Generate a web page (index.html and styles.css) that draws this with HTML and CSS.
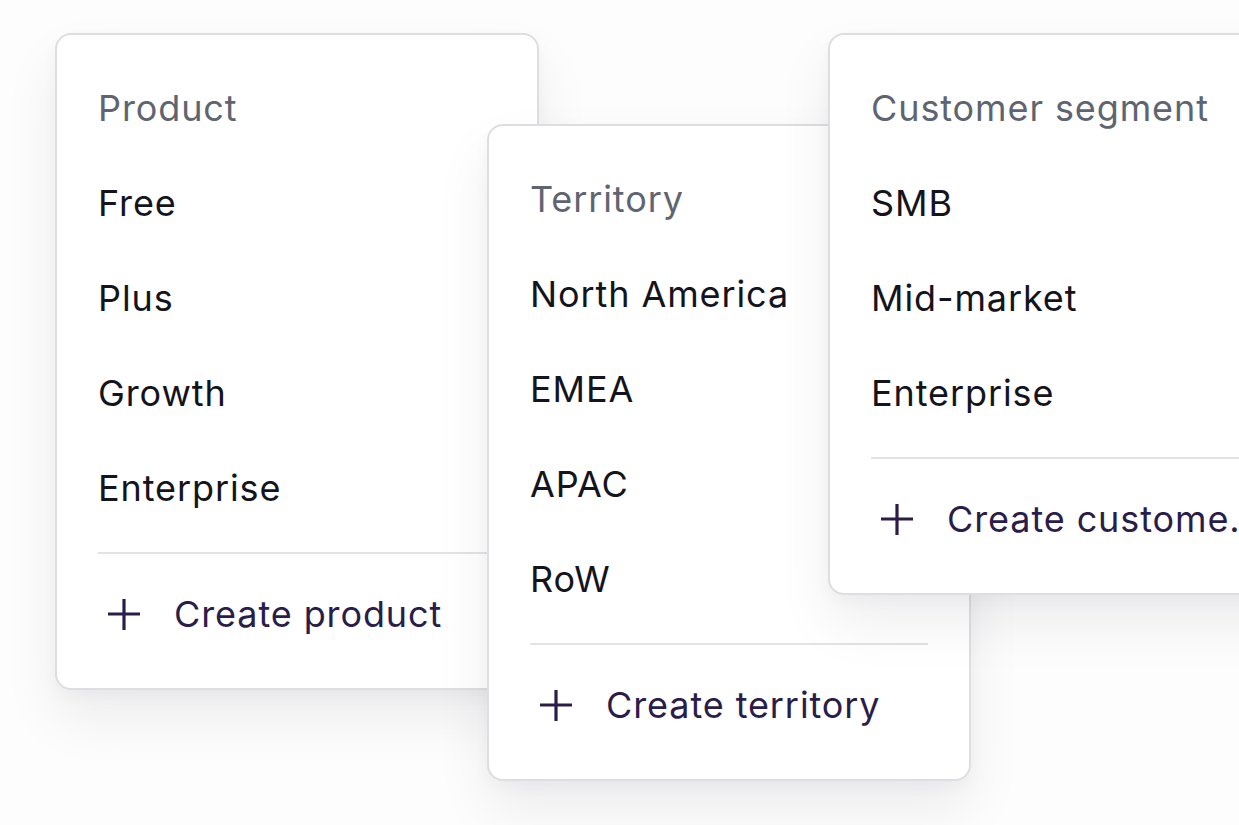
FILE: index.html
```html
<!DOCTYPE html>
<html>
<head>
<meta charset="utf-8">
<link rel="stylesheet" href="styles.css">
</head>
<body>
<div class="canvas">
  <div class="card card-product">
    <div class="card-title">Product</div>
    <div class="item">Free</div>
    <div class="item">Plus</div>
    <div class="item">Growth</div>
    <div class="item">Enterprise</div>
    <div class="divider"></div>
    <div class="create">
      <svg class="plus" viewBox="0 0 32 32" width="32" height="32"><path d="M16 1v32M0 16h32" stroke="#2b1d4a" stroke-width="3.2" fill="none"/></svg>
      <span class="create-label">Create product</span>
    </div>
  </div>
  <div class="card card-territory">
    <div class="card-title">Territory</div>
    <div class="item">North America</div>
    <div class="item">EMEA</div>
    <div class="item">APAC</div>
    <div class="item">RoW</div>
    <div class="divider"></div>
    <div class="create">
      <svg class="plus" viewBox="0 0 32 32" width="32" height="32"><path d="M16 1v32M0 16h32" stroke="#2b1d4a" stroke-width="3.2" fill="none"/></svg>
      <span class="create-label">Create territory</span>
    </div>
  </div>
  <div class="card card-segment">
    <div class="card-title">Customer segment</div>
    <div class="item">SMB</div>
    <div class="item">Mid-market</div>
    <div class="item">Enterprise</div>
    <div class="divider"></div>
    <div class="create">
      <svg class="plus" viewBox="0 0 32 32" width="32" height="32"><path d="M16 1v32M0 16h32" stroke="#2b1d4a" stroke-width="3.2" fill="none"/></svg>
      <span class="create-label">Create customer segment</span>
    </div>
  </div>
</div>
</body>
</html>
```

FILE: styles.css
```css
html, body {
  margin: 0;
  padding: 0;
}
body {
  background: #fdfdfd;
  font-family: Inter, "Liberation Sans", sans-serif;
  overflow: hidden;
  width: 1239px;
  height: 825px;
}
.canvas {
  position: relative;
  width: 1239px;
  height: 825px;
  overflow: hidden;
}
.card {
  position: absolute;
  width: 484px;
  box-sizing: border-box;
  background: #ffffff;
  border: 2px solid #dedee2;
  border-radius: 16px;
  padding: 25px 41px 27px 41px;
  display: flex;
  flex-direction: column;
  box-shadow: 0 28px 56px rgba(20, 20, 40, 0.07), 0 6px 16px rgba(20, 20, 40, 0.03);
}
.card-product { left: 55px; top: 33px; z-index: 1; }
.card-territory { left: 487px; top: 124px; z-index: 2; }
.card-segment { left: 828px; top: 33px; z-index: 3; }

.card-title,
.item {
  height: 95px;
  display: flex;
  align-items: center;
  font-size: 36px;
  letter-spacing: 0.9px;
  white-space: nowrap;
}
.card-title {
  color: #5f6570;
}
.item {
  color: #14141c;
}
.divider {
  height: 2px;
  background: #e3e3e7;
  margin-top: 17px;
  margin-bottom: 12px;
}
.create {
  height: 95px;
  display: flex;
  align-items: center;
  gap: 34px;
  padding-left: 10px;
  color: #2b1d4a;
  font-size: 36px;
  letter-spacing: 0.9px;
  min-width: 0;
}
.plus {
  flex: none;
}
.create-label {
  white-space: nowrap;
  overflow: hidden;
  text-overflow: ellipsis;
  min-width: 0;
}
```
